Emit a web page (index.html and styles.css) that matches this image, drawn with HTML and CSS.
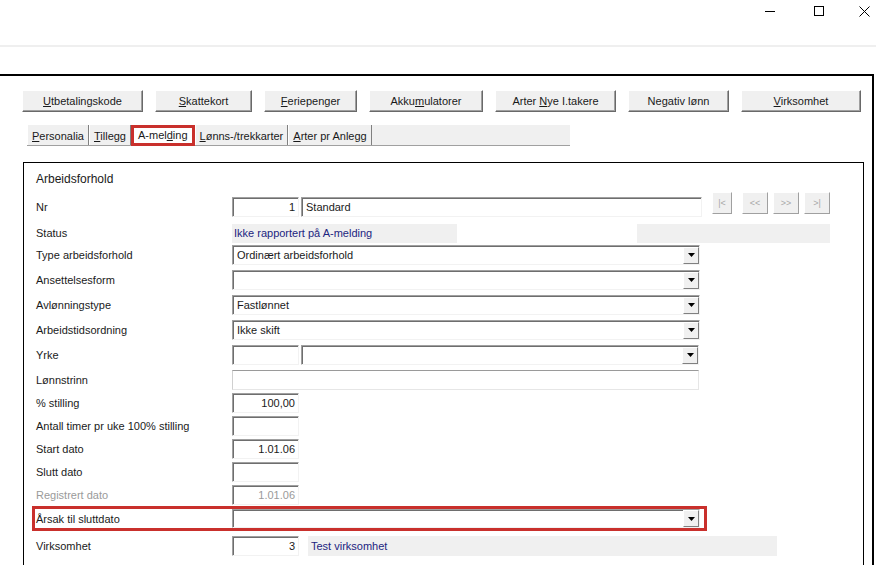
FILE: index.html
```html
<!DOCTYPE html>
<html lang="no">

<head>
    <meta charset="utf-8">
    <title>A-melding - Arbeidsforhold</title>
    <link rel="stylesheet" href="styles.css">
</head>

<body>
    <div class="titlebar">
        <svg class="winctl winctl--min" width="11" height="11" viewBox="0 0 11 11"><path d="M0 5.5h10" stroke="#000" fill="none"/></svg>
        <svg class="winctl winctl--max" width="11" height="11" viewBox="0 0 11 11"><rect x="0.5" y="0.5" width="9" height="9" stroke="#000" fill="none"/></svg>
        <svg class="winctl" width="11" height="11" viewBox="0 0 11 11"><path d="M0.5 0.5l10 10M10.5 0.5l-10 10" stroke="#000" fill="none"/></svg>
    </div>
    <div class="rule"></div>

    <div class="window">
        <div class="toolbar">
            <button class="button"><u>U</u>tbetalingskode</button>
            <button class="button"><u>S</u>kattekort</button>
            <button class="button"><u>F</u>eriepenger</button>
            <button class="button">Akku<u>m</u>ulatorer</button>
            <button class="button">Arter <u>N</u>ye I.takere</button>
            <button class="button">Ne<u>g</u>ativ lønn</button>
            <button class="button"><u>V</u>irksomhet</button>
        </div>

        <div class="tabs">
            <div class="tab"><u>P</u>ersonalia</div>
            <div class="tab"><u>T</u>illegg</div>
            <div class="tab tab--active">A-mel<u>d</u>ing</div>
            <div class="tab"><u>L</u>ønns-/trekkarter</div>
            <div class="tab"><u>A</u>rter pr Anlegg</div>
        </div>

        <div class="panel">
            <div class="panel-title">Arbeidsforhold</div>

            <div class="form">
                <div class="row">
                    <div class="label">Nr</div>
                    <div class="field field--num w-short">1</div>
                    <div class="field w-name">Standard</div>
                    <div class="nav">
                        <span class="navbtn navbtn--first">|&lt;</span>
                        <span class="navbtn">&lt;&lt;</span>
                        <span class="navbtn">&gt;&gt;</span>
                        <span class="navbtn">&gt;|</span>
                    </div>
                </div>

                <div class="row row--status">
                    <div class="label">Status</div>
                    <div class="readout w-status">Ikke rapportert på A-melding</div>
                    <div class="readout w-status2"></div>
                </div>

                <div class="row">
                    <div class="label">Type arbeidsforhold</div>
                    <div class="field select w-select">Ordinært arbeidsforhold<span class="dropbtn"><svg width="7" height="4" viewBox="0 0 7 4"><path d="M0 0h7L3.5 4z"/></svg></span></div>
                </div>

                <div class="row">
                    <div class="label">Ansettelsesform</div>
                    <div class="field select w-select"><span class="dropbtn"><svg width="7" height="4" viewBox="0 0 7 4"><path d="M0 0h7L3.5 4z"/></svg></span></div>
                </div>

                <div class="row">
                    <div class="label">Avlønningstype</div>
                    <div class="field select w-select">Fastlønnet<span class="dropbtn"><svg width="7" height="4" viewBox="0 0 7 4"><path d="M0 0h7L3.5 4z"/></svg></span></div>
                </div>

                <div class="row">
                    <div class="label">Arbeidstidsordning</div>
                    <div class="field select w-select">Ikke skift<span class="dropbtn"><svg width="7" height="4" viewBox="0 0 7 4"><path d="M0 0h7L3.5 4z"/></svg></span></div>
                </div>

                <div class="row">
                    <div class="label">Yrke</div>
                    <div class="field w-short"></div>
                    <div class="field select w-yrke"><span class="dropbtn"><svg width="7" height="4" viewBox="0 0 7 4"><path d="M0 0h7L3.5 4z"/></svg></span></div>
                </div>

                <div class="row">
                    <div class="label">Lønnstrinn</div>
                    <div class="field field--flat w-lonn"></div>
                </div>

                <div class="row row--tight">
                    <div class="label">% stilling</div>
                    <div class="field field--num w-short">100,00</div>
                </div>

                <div class="row row--tight">
                    <div class="label">Antall timer pr uke 100% stilling</div>
                    <div class="field field--num w-short"></div>
                </div>

                <div class="row row--tight">
                    <div class="label">Start dato</div>
                    <div class="field field--num w-short">1.01.06</div>
                </div>

                <div class="row row--tight">
                    <div class="label">Slutt dato</div>
                    <div class="field field--num w-short"></div>
                </div>

                <div class="row row--tight row--disabled">
                    <div class="label">Registrert dato</div>
                    <div class="field field--num w-short">1.01.06</div>
                </div>

                <div class="row row--marked">
                    <div class="label">Årsak til sluttdato</div>
                    <div class="field select w-select"><span class="dropbtn"><svg width="7" height="4" viewBox="0 0 7 4"><path d="M0 0h7L3.5 4z"/></svg></span></div>
                </div>

                <div class="row">
                    <div class="label">Virksomhet</div>
                    <div class="field field--num w-short">3</div>
                    <div class="readout w-firma">Test virksomhet</div>
                </div>
            </div>
        </div>
    </div>
</body>

</html>
```

FILE: styles.css
```css
body {
    margin: 0;
    padding: 0;
    background-color: #fff;
    font-family: "Liberation Sans", Arial, sans-serif;
    font-size: 11px;
    color: #1a1a1a;
    overflow: hidden;
    height: 565px;
}

u {
    text-decoration: underline;
    text-underline-offset: 1px;
}

/* Window title bar */
.titlebar {
    height: 45px;
    display: flex;
    justify-content: flex-end;
    align-items: flex-start;
    padding-top: 6px;
    padding-right: 6px;
    box-sizing: border-box;
}

.winctl {
    display: block;
}

.winctl--min {
    margin-right: 38px;
}

.winctl--max {
    margin-right: 34px;
}

.rule {
    height: 2px;
    background-color: #efefef;
}

/* Main frame */
.window {
    margin-top: 27px;
    margin-right: 2px;
    border-top: 2px solid #000;
    border-right: 2px solid #000;
    padding: 14px 0 0 22px;
    height: 600px;
}

.toolbar {
    display: grid;
    grid-template-columns: 121px 97px 93px 114px 121px 101px 120px;
    column-gap: 12px;
}

.button {
    height: 22px;
    padding: 0;
    background-color: #f0f0f0;
    border: 1px solid;
    border-color: #fff #696969 #696969 #fff;
    box-shadow: inset -1px -1px #a0a0a0;
    font-family: inherit;
    font-size: 11px;
    color: #1a1a1a;
}

/* Tabs */
.tabs {
    display: flex;
    align-items: center;
    width: 543px;
    height: 21px;
    margin: 13px 0 0 5px;
    background-color: #f0f0f0;
    border-bottom: 1px solid #a0a0a0;
    box-sizing: border-box;
}

.tab {
    padding: 2px 4px 0;
    height: 20px;
    line-height: 18px;
    box-sizing: border-box;
    border-left: 1px solid #fff;
    border-right: 1px solid #808080;
}

.tab--active {
    background-color: #fff;
    border: 3px solid #c9302c;
    height: 21px;
    padding: 0 4px;
    line-height: 14px;
    margin-top: 1px;
}

/* Content panel */
.panel {
    margin: 16px 0 0 1px;
    width: 841px;
    height: 420px;
    box-sizing: border-box;
    border: 1px solid #000;
    border-bottom: none;
    padding: 9px 0 0 12px;
}

.panel-title {
    font-size: 12px;
    line-height: 14px;
    margin-bottom: 11px;
}

.form {
    display: flex;
    flex-direction: column;
    align-items: flex-start;
}

.row {
    display: flex;
    align-items: center;
}

.row+.row {
    margin-top: 5px;
}

.row+.row--tight {
    margin-top: 3px;
}

.row+.row--status {
    margin-top: 6px;
}

.row--status+.row {
    margin-top: 2px;
}

.label {
    width: 196px;
    flex: none;
    line-height: 20px;
    white-space: nowrap;
}

.row--disabled .label,
.row--disabled .field {
    color: #9a9a9a;
}

.row+.row--marked {
    margin-top: 1px;
    margin-left: -4px;
    border: 3px solid #c9302c;
    padding: 0 4px 0 1px;
    height: 25px;
    box-sizing: border-box;
}

.row--marked .field {
    height: 19px;
}

.field {
    height: 20px;
    box-sizing: border-box;
    background-color: #fff;
    border: 1px solid;
    border-color: #a0a0a0 #f2f2f2 #f2f2f2 #a0a0a0;
    box-shadow: inset 1px 1px #6e6e6e;
    padding: 0 3px 0 4px;
    display: flex;
    align-items: center;
    white-space: nowrap;
    flex: none;
}

.field+.field {
    margin-left: 2px;
}

.field--num {
    justify-content: flex-end;
}

.field--flat {
    border-color: #9a9a9a #e6e6e6 #e6e6e6 #d0d0d0;
    box-shadow: none;
}

.select {
    padding-right: 0;
}

.dropbtn {
    margin-left: auto;
    width: 16px;
    height: 17px;
    box-sizing: border-box;
    display: flex;
    justify-content: center;
    align-items: center;
    background-color: #f0f0f0;
    border: 1px solid;
    border-color: #fff #808080 #808080 #fff;
}

.w-short {
    width: 67px;
}

.w-name {
    width: 401px;
}

.w-select {
    width: 468px;
}

.w-yrke {
    width: 398px;
    margin-left: 3px;
}

.w-lonn {
    width: 467px;
}

/* Record navigation */
.nav {
    display: flex;
    margin-left: 10px;
    margin-top: -5px;
    align-self: flex-start;
}

.navbtn {
    width: 26px;
    height: 22px;
    box-sizing: border-box;
    display: flex;
    justify-content: center;
    align-items: center;
    background-color: #f0f0f0;
    border: 1px solid;
    border-color: #fff #a0a0a0 #a0a0a0 #fff;
    color: #a8a8a8;
    font-size: 9px;
    margin-left: 5px;
}

.navbtn--first {
    width: 20px;
    margin-left: 0;
    margin-right: 5px;
}

/* Read-only values */
.readout {
    height: 19px;
    background-color: #f0f0f0;
    color: #1c2580;
    display: flex;
    align-items: center;
    padding-left: 2px;
    box-sizing: border-box;
    white-space: nowrap;
}

.w-status {
    width: 225px;
}

.w-status2 {
    width: 193px;
    margin-left: 180px;
}

.w-firma {
    width: 469px;
    height: 20px;
    margin-left: 9px;
    padding-left: 3px;
}
```
